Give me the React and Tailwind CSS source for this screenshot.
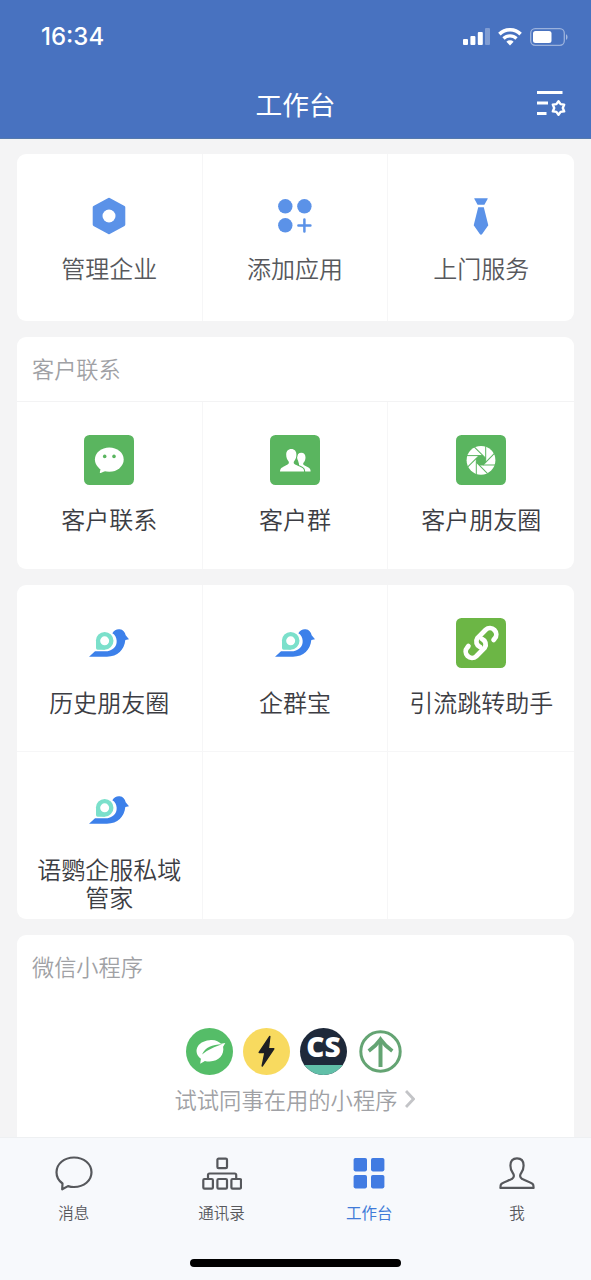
import React from 'react';

const quickActions = [
  { label: '管理企业', icon: HexIcon },
  { label: '添加应用', icon: AddAppIcon },
  { label: '上门服务', icon: TieIcon },
];

const customerApps = [
  { label: '客户联系', icon: ChatTile },
  { label: '客户群', icon: GroupTile },
  { label: '客户朋友圈', icon: MomentsTile },
];

const thirdPartyApps = [
  { label: '历史朋友圈', icon: BirdIcon },
  { label: '企群宝', icon: BirdIcon },
  { label: '引流跳转助手', icon: LinkTile },
  { label: '语鹦企服私域管家', icon: BirdIcon },
  null,
  null,
];

const tabs = [
  { label: '消息', icon: MessageIcon },
  { label: '通讯录', icon: ContactsIcon },
  { label: '工作台', icon: WorkbenchIcon, active: true },
  { label: '我', icon: MeIcon },
];

function HexIcon() {
  return (
    <svg width="34" height="38" viewBox="0 0 34 38">
      <path
        d="M17 2.2 31.8 10.4V27.6L17 35.8 2.2 27.6V10.4Z"
        fill="#5b92e8"
        stroke="#5b92e8"
        strokeWidth="3"
        strokeLinejoin="round"
      />
      <circle cx="17" cy="19" r="6.5" fill="#fff" />
    </svg>
  );
}

function AddAppIcon() {
  return (
    <svg width="34" height="34" viewBox="0 0 34 34" fill="#5b92e8">
      <circle cx="7.3" cy="7.3" r="7.2" />
      <circle cx="26.4" cy="7.3" r="7.2" />
      <circle cx="7.3" cy="26.3" r="7.2" />
      <path d="M26.4 20.5v12M20.4 26.4h12" stroke="#5b92e8" strokeWidth="2.5" strokeLinecap="round" />
    </svg>
  );
}

function TieIcon() {
  return (
    <svg width="16" height="38" viewBox="0 0 16 38" fill="#5b92e8">
      <path d="M1.8 1.2h12.4c.5 0 .7.5.4.9L11.4 7.8H4.6L1.4 2.1c-.3-.4-.1-.9.4-.9Z" />
      <path d="M5.2 10.3h5.6L15.3 28.3 9.2 37c-.6.9-1.8.9-2.4 0L.7 28.3Z" />
    </svg>
  );
}

function ChatTile() {
  return (
    <svg width="50" height="50" viewBox="0 0 50 50">
      <rect width="50" height="50" rx="5.5" fill="#5ab55f" />
      <ellipse cx="25.3" cy="24.6" rx="14.4" ry="12.1" fill="#fff" />
      <path d="M17 32 15.8 37.3c-.1.6.4.9.9.6L22.5 35.5Z" fill="#fff" />
      <circle cx="20.7" cy="21.4" r="1.8" fill="#5ab55f" />
      <circle cx="30" cy="21.4" r="1.8" fill="#5ab55f" />
    </svg>
  );
}

function GroupTile() {
  return (
    <svg width="50" height="50" viewBox="0 0 50 50">
      <rect width="50" height="50" rx="5.5" fill="#5ab55f" />
      <path
        d="M31.3 17.8c2.7 0 4.2 1.9 4.2 4.6 0 2.3-.8 3.9-2 5.4-.5.7-.4 1.8.3 2.3 2.1 1.5 5.7 2.3 6.5 4.4.3.8.3 2 .3 2H29V29L28 25.5c-.6-1-.9-2-.9-3.1 0-2.7 1.500-4.600 4.200-4.600Z"
        fill="#fff"
      />
      <path
        d="M21.3 14c3.3 0 5.100 2.300 5.100 5.700 0 2.800-1 4.800-2.300 6.500-.6.9-.5 2.300.3 2.900 2.700 1.900 8.100 3 9.300 5.500.4.900.4 1.900.4 1.900H10s0-1 .4-1.900c1.100-2.500 5.300-3.600 7.800-5.500.8-.6.9-2 .3-2.900-1.300-1.700-2.300-3.700-2.300-6.500 0-3.400 1.800-5.700 5.100-5.700Z"
        fill="#fff"
        stroke="#5ab55f"
        strokeWidth="2.2"
        paintOrder="stroke"
      />
    </svg>
  );
}

function MomentsTile() {
  return (
    <svg width="50" height="50" viewBox="0 0 50 50">
      <rect width="50" height="50" rx="5.5" fill="#5ab55f" />
      <g transform="translate(25 25.3)">
        <circle r="14.4" fill="#fff" />
        <path d="M1.9-4.7 4.7-1.9V1.9L1.9 4.7H-1.9L-4.7 1.9V-1.9L-1.9-4.7Z" fill="#5ab55f" />
        {[0, 45, 90, 135, 180, 225, 270, 315].map((angle) => (
          <path key={angle} d="M4.7 2V-14" transform={`rotate(${angle})`} stroke="#5ab55f" strokeWidth="1" />
        ))}
      </g>
    </svg>
  );
}

function LinkTile() {
  return (
    <svg width="50" height="50" viewBox="0 0 50 50">
      <rect width="50" height="50" rx="5.5" fill="#6cb645" />
      <g fill="none" stroke="#fff" strokeWidth="4.8" strokeLinecap="round">
        <path d="M37.6 21.9 38.6 20.7A6.3 6.3 0 0 0 29.7 11.8L21.3 20.2A6 6 0 0 0 24 29" />
        <path d="M12.4 28.1 11.4 29.3A6.3 6.3 0 0 0 20.3 38.2L28.7 29.8A6 6 0 0 0 26 21" />
      </g>
    </svg>
  );
}

function BirdIcon() {
  return (
    <svg width="40" height="28" viewBox="0 0 120 84">
      <path
        d="M0 83 18 67H48C70 67 84 53 83 35 82 25 78 17 70 13 75 3 84 0 92 1 102 2 108 9 110 19L120 31 109 33C106 62 86 83 54 83Z"
        fill="#3c80ea"
      />
      <path d="M21 36V57Q21 62 26 62H47V48L34 36Z" fill="#7be0cb" />
      <circle cx="47" cy="35.500" r="20" fill="#fff" stroke="#7be0cb" strokeWidth="13" />
    </svg>
  );
}

function MessageIcon() {
  return (
    <svg width="40" height="36" viewBox="0 0 40 36" fill="none" stroke="#56585c" strokeWidth="2.2" strokeLinejoin="round">
      <path d="M20 1.5C30 1.5 37.5 8 37.5 16.3S30 31 20 31c-2 0-4-.3-6-.9L8.2 33.3 8.5 27.5C4.5 24.7 2.5 20.7 2.5 16.3 2.5 8 10 1.5 20 1.5Z" />
    </svg>
  );
}

function ContactsIcon() {
  return (
    <svg width="40" height="36" viewBox="0 0 40 36" fill="none" stroke="#56585c" strokeWidth="2.2">
      <rect x="15.4" y="2.6" width="9.6" height="9.6" rx="1.2" />
      <rect x="1.3" y="23" width="9.6" height="9.6" rx="1.2" />
      <rect x="15.4" y="23" width="9.6" height="9.6" rx="1.2" />
      <rect x="29.4" y="23" width="9.6" height="9.6" rx="1.2" />
      <path d="M6 23V19q0-1.5 1.5-1.5H32.7q1.5 0 1.5 1.5V23" />
    </svg>
  );
}

function WorkbenchIcon() {
  return (
    <svg width="40" height="36" viewBox="0 0 40 36" fill="#417be2">
      <rect x="4.6" y="2" width="13.4" height="13.4" rx="1.8" />
      <rect x="22" y="2" width="13.4" height="13.4" rx="1.8" />
      <rect x="4.6" y="19" width="13.4" height="13.4" rx="1.8" />
      <rect x="22" y="19" width="13.4" height="13.4" rx="1.8" />
    </svg>
  );
}

function MeIcon() {
  return (
    <svg width="40" height="36" viewBox="0 0 40 36" fill="none" stroke="#56585c" strokeWidth="2.2" strokeLinejoin="round">
      <path d="M20 2.3c4.4 0 6.6 3 6.6 7.2 0 3.3-.9 5.6-2.4 7.5-1.5 2-1.6 4.6.9 5.9 3.4 1.9 8.1 2.9 10.500 5 1 .9 1 2.200 1 4H3.400c0-1.800 0-3.100 1-4 2.400-2.100 7.100-3.100 10.500-5 2.500-1.300 2.400-3.900.9-5.900-1.500-1.900-2.400-4.200-2.400-7.500C13.400 5.300 15.600 2.300 20 2.300Z" />
    </svg>
  );
}

function StatusBar() {
  return (
    <div className="flex h-[73px] items-center justify-between pr-[23px] pl-[41px]">
      <span className="pt-px font-['Inter'] text-[24px] font-medium leading-none">16:34</span>
      <div className="flex items-center gap-2">
        <svg width="27" height="18" viewBox="0 0 27 18" fill="#fff">
          <rect x="0" y="11" width="5" height="6" rx="1" />
          <rect x="7.4" y="8" width="5" height="9" rx="1" />
          <rect x="14.8" y="4" width="5" height="13" rx="1" />
          <rect x="22" y="0" width="5" height="17" rx="1" opacity=".3" />
        </svg>
        <svg width="24" height="18" viewBox="0 0 24 18" fill="none" stroke="#fff">
          <path d="M1.4 6.1a15.2 15.2 0 0 1 21.2 0" strokeWidth="3.6" />
          <path d="M5.5 10.5a9.2 9.2 0 0 1 13 0" strokeWidth="3.2" />
          <path d="M12 17.5 8.4 13.7a5.1 5.1 0 0 1 7.2 0Z" fill="#fff" stroke="none" />
        </svg>
        <svg width="38" height="18" viewBox="0 0 38 18">
          <rect x=".7" y=".7" width="33.6" height="16.6" rx="4.5" fill="none" stroke="#fff" strokeWidth="1.3" opacity=".45" />
          <rect x="3" y="3" width="18.5" height="12" rx="2.5" fill="#fff" />
          <path d="M36 6.2c2 .8 2 4.800 0 5.600Z" fill="#fff" opacity=".5" />
        </svg>
      </div>
    </div>
  );
}

function Header() {
  return (
    <header className="h-[139px] shrink-0 border-b border-[#5579ad] bg-[#4872c0] text-white">
      <StatusBar />
      <div className="grid h-[62px] grid-cols-3 items-center px-[24px]">
        <span />
        <h1 className="text-center text-[26.7px] font-normal whitespace-nowrap">工作台</h1>
        <svg className="justify-self-end" width="30" height="28" viewBox="0 0 30 28" fill="none" stroke="#fff">
          <path d="M0 2.4h25.5M0 13h11M0 23.4h9.5" strokeWidth="3" />
          <path
            d="M21.5 11.2 23.6 14.1 27.2 14.6 25.8 18 27.2 21.4 23.6 21.900 21.5 24.8 19.4 21.900 15.8 21.4 17.2 18 15.8 14.6 19.4 14.1Z"
            strokeWidth="2.4"
            strokeLinejoin="round"
          />
        </svg>
      </div>
    </header>
  );
}

function Card({ title, children }) {
  return (
    <section className="overflow-hidden rounded-[9px] bg-white">
      {title && <h2 className="flex h-16 items-center pl-[15px] text-[22.2px] font-[350] text-[#a0a1a5]">{title}</h2>}
      {children}
    </section>
  );
}

function AppGrid({ items, muted }) {
  return (
    <div className="grid grid-cols-3">
      {items.map((item, i) => (
        <div
          key={i}
          className="flex h-[167px] flex-col items-center border-r border-b border-[#f6f6f7] nth-[3n]:border-r-0 nth-last-[-n+3]:border-b-0"
        >
          {item && (
            <>
              <div className={muted ? 'mt-[36px] flex h-[52px] items-center' : 'mt-[33px] flex h-[50px] items-center'}>
                <item.icon />
              </div>
              <p
                className={
                  muted
                    ? 'mt-[12px] text-center text-[24px] leading-[28px] font-[350] whitespace-nowrap text-[#57585c]'
                    : 'mt-[20px] w-[150px] text-center text-[24px] leading-[28px] font-[350] text-[#3c3d43]'
                }
              >
                {item.label}
              </p>
            </>
          )}
        </div>
      ))}
    </div>
  );
}

function MiniPrograms() {
  return (
    <div className="flex flex-col items-center pt-[29px] pr-px">
      <div className="flex items-center gap-[10px]">
        <svg width="47" height="47" viewBox="0 0 47 47">
          <circle cx="23.5" cy="23.5" r="23.5" fill="#55bd68" />
          <path
            d="M23.5 12.2c5.5-.8 9.5 1.5 11.5 3.6l4.3-.8-2.2 3.8c1.5 7.8-4 14.5-13.5 14.7-1.8 0-3.4-.2-4.7-.6l-4.7 2.9.7-5.100c-7.800-6-5-17.200 8.600-18.500Z"
            fill="#fff"
          />
          <path d="M16 26.5C19.5 19 26 16.5 36 16.2 28.5 18.8 22.5 21.3 16 26.5Z" fill="#55bd68" />
        </svg>
        <svg width="47" height="47" viewBox="0 0 47 47">
          <circle cx="23.5" cy="23.5" r="23.5" fill="#f8da5f" />
          <path
            d="M26.8 8.5 16.2 24.4H22L19.2 38 30.8 20.8H25.3Z"
            fill="#1e1f24"
            stroke="#1e1f24"
            strokeWidth="1.5"
            strokeLinejoin="round"
          />
        </svg>
        <div className="flex h-[47px] w-[47px] flex-col overflow-hidden rounded-full bg-[#1e293a]">
          <span className="h-[37px] text-center font-['Open_Sans'] text-[28px] leading-[37px] font-extrabold text-white">
            CS
          </span>
          <span className="h-[10px] bg-[#61bfa8]" />
        </div>
        <svg width="47" height="47" viewBox="0 0 47 47" fill="none" stroke="#64a473">
          <circle cx="23.5" cy="23.5" r="19.7" strokeWidth="3" />
          <path d="M23.5 12V39" strokeWidth="4" />
          <path d="M11.7 23C16.5 19.500 20.500 15.500 23.500 11.300 26.500 15.500 30.500 19.500 35.300 23" strokeWidth="3.800" />
        </svg>
      </div>
      <p className="mt-[7px] flex items-center gap-[8px] text-[22.3px] leading-[34px] font-[350] text-[#a0a1a5]">
        试试同事在用的小程序
        <svg width="10" height="18" viewBox="0 0 10 18" fill="none" stroke="#c3c4c7" strokeWidth="2.8">
          <path d="M1 1 8.5 9 1 17" />
        </svg>
      </p>
    </div>
  );
}

function TabBar() {
  return (
    <nav className="flex h-[143px] shrink-0 flex-col items-center border-t border-[#eef0f2] bg-[#f7f9fc]">
      <div className="grid w-full grid-cols-4">
        {tabs.map((tab) => (
          <div key={tab.label} className="flex flex-col items-center pt-[18px]">
            <tab.icon />
            <span
              className={
                tab.active
                  ? 'mt-[8px] text-[15.5px] leading-[24px] text-[#417bd8]'
                  : 'mt-[8px] text-[15.5px] leading-[24px] font-[350] text-[#57585c]'
              }
            >
              {tab.label}
            </span>
          </div>
        ))}
      </div>
      <div className="mt-[35px] h-[8px] w-[211px] rounded-full bg-black" />
    </nav>
  );
}

export default function App() {
  return (
    <div className="flex h-[1280px] w-[591px] flex-col overflow-hidden bg-[#f4f4f5] font-['Noto_Sans_CJK_SC',sans-serif]">
      <Header />
      <main className="flex min-h-0 flex-1 flex-col gap-4 overflow-hidden px-[17px] pt-[15px] *:shrink-0">
        <Card>
          <AppGrid items={quickActions} muted />
        </Card>
        <Card title="客户联系">
          <div className="border-t border-[#f3f3f4]">
            <AppGrid items={customerApps} />
          </div>
        </Card>
        <Card>
          <AppGrid items={thirdPartyApps} />
        </Card>
        <Card title="微信小程序">
          <div className="h-[220px]">
            <MiniPrograms />
          </div>
        </Card>
      </main>
      <TabBar />
    </div>
  );
}
